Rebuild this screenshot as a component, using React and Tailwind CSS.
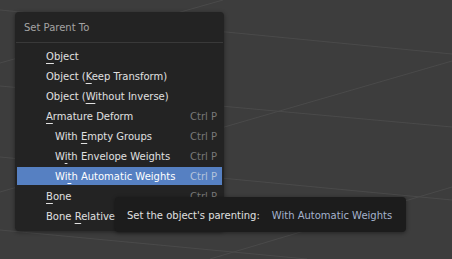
const items = [
  { pre: '', key: 'O', post: 'bject', indent: false },
  { pre: 'Object (', key: 'K', post: 'eep Transform)', indent: false },
  { pre: 'Object (', key: 'W', post: 'ithout Inverse)', indent: false },
  { pre: '', key: 'A', post: 'rmature Deform', indent: false, shortcut: 'Ctrl P' },
  { pre: 'With ', key: 'E', post: 'mpty Groups', indent: true, shortcut: 'Ctrl P' },
  { pre: 'W', key: 'i', post: 'th Envelope Weights', indent: true, shortcut: 'Ctrl P' },
  { pre: 'Wi', key: 't', post: 'h Automatic Weights', indent: true, shortcut: 'Ctrl P', active: true },
  { pre: '', key: 'B', post: 'one', indent: false, shortcut: 'Ctrl P' },
  // shortcut of this row sits under the tooltip
  { pre: 'Bone ', key: 'R', post: 'elative', indent: false },
]

function MenuRow({ item }) {
  return (
    <div className="h-5 px-0.5 flex items-stretch">
      <div
        className={`flex-1 flex items-center my-px pt-[2px] pr-[5px] ${item.active ? 'bg-[#5680c2] text-white' : 'text-[#e0e0e0]'}`}
      >
        <span className={item.indent ? 'pl-[38px]' : 'pl-[29px]'}>
          {item.pre}
          <span className="underline underline-offset-[3px] decoration-1">{item.key}</span>
          {item.post}
        </span>
        {item.shortcut && (
          <span className={`ml-auto ${item.active ? 'text-[#b4c3dc]' : 'text-[#787878]'}`}>{item.shortcut}</span>
        )}
      </div>
    </div>
  )
}

export default function App() {
  return (
    <div
      className="relative w-[452px] h-[259px] overflow-hidden bg-[#3d3d3d] text-[10px] leading-none"
      style={{ fontFamily: '"DejaVu Sans", sans-serif' }}
    >
      {/* viewport grid */}
      <svg className="absolute inset-0" width="452" height="259">
        <g stroke="#4a4a4a" strokeWidth="1">
          <line x1="0" y1="10" x2="452" y2="54" />
          <line x1="0" y1="63" x2="223" y2="0" />
          <line x1="0" y1="86" x2="452" y2="127" />
          <line x1="0" y1="157" x2="452" y2="200" />
          <line x1="0" y1="192" x2="452" y2="61" />
          <line x1="0" y1="230" x2="307" y2="259" />
          <line x1="210" y1="259" x2="452" y2="187" />
        </g>
      </svg>

      {/* menu */}
      <div className="absolute left-[15px] top-[12px] w-[209px] h-[219px] rounded bg-[#232323] shadow-[0_1px_4px_rgba(0,0,0,0.45)]">
        <div className="h-[30px] flex items-center pt-[2px] pl-[9px] text-[#a3a3a3]">Set Parent To</div>
        <div className="mx-px h-px bg-[#393939]" />
        <div className="pt-[3px]">
          {items.map((item, i) => (
            <MenuRow key={i} item={item} />
          ))}
        </div>
      </div>

      {/* tooltip */}
      <div className="absolute left-[115px] top-[197px] w-[291px] h-[35px] rounded bg-[#1c1c1c] shadow-[0_1px_4px_rgba(0,0,0,0.45)] flex items-center pt-[2px] pl-[12px]">
        <span className="text-[#e0e0e0]">Set the object's parenting:</span>
        <span className="ml-[12px] text-[#a5b3cd]">With Automatic Weights</span>
      </div>
    </div>
  )
}
